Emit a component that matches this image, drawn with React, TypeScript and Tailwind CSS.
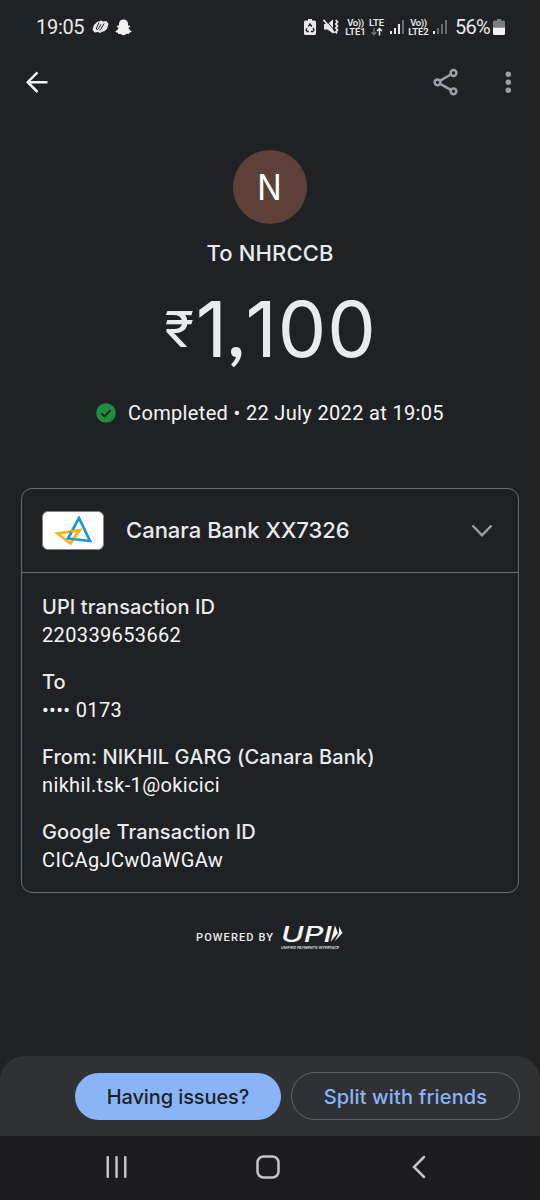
import type { ReactNode } from 'react';

// ---------- Types ----------

interface DetailItem {
  label: string;
  value: ReactNode;
}

// ---------- Data ----------

const DETAILS: DetailItem[] = [
  { label: 'UPI transaction ID', value: '220339653662' },
  { label: 'To', value: '•••• 0173' },
  { label: 'From: NIKHIL GARG (Canara Bank)', value: 'nikhil.tsk-1@okicici' },
  { label: 'Google Transaction ID', value: 'CICAgJCw0aWGAw' },
];

// ---------- Status bar ----------

function SignalBars({ strong }: { strong: number }) {
  const bars = [
    { x: 0, h: 3 },
    { x: 4, h: 6 },
    { x: 8, h: 10 },
    { x: 12, h: 14 },
  ];
  return (
    <svg width="15" height="14" viewBox="0 0 15 14" aria-hidden="true">
      {bars.map((bar, i) => (
        <rect
          key={bar.x}
          x={bar.x}
          y={14 - bar.h}
          width="2"
          height={bar.h}
          fill={i < strong ? '#e8e8ea' : '#6a6b6e'}
        />
      ))}
    </svg>
  );
}

function VolteLabel({ sim }: { sim: string }) {
  return (
    <div className="flex w-[21px] flex-col items-center text-[9.5px] leading-[9px] font-semibold whitespace-nowrap">
      <span className="tracking-[-0.4px]">Vo))</span>
      <span className="tracking-[-0.1px]">{sim}</span>
    </div>
  );
}

function StatusBar() {
  return (
    <header className="flex h-[54px] shrink-0 items-center pr-[35px] pl-9 font-[Roboto,sans-serif] text-[#e8e8ea]">
      <span className="text-[20px] leading-6 tracking-[-0.3px]">19:05</span>
      <svg className="ml-2" width="17" height="14" viewBox="0 0 17 14" aria-hidden="true">
        <path d="M5 2 9 .5l2 1L14.500 1l2 3-1.500 5-3 2.500-1.500 0L8 13l-2-1-3.500.5L.5 9.500 2 5z" fill="#e8e8ea" />
        <path
          d="M7 2.500 4.500 8q-.4 1.800 1 1.500 1-.3 1.500-1.600L9 4.200M12 3.500 9.500 8q-.6 1.800-2 2.300"
          fill="none"
          stroke="#202124"
          strokeWidth="1"
        />
      </svg>
      <svg className="ml-[6px]" width="17" height="17" viewBox="0 0 17 17" aria-hidden="true">
        <path
          d="M8.500.5C5.500.5 4 2.500 4 5v1.500l-1.800.2c-.8.5-.2 1.300 1.300 1.900C3.300 10.300 2 11.500.5 12.200c-.5.6.5 1.200 2.200 1.400l.4 1.300 2.300-.2c1 .4 1.500 1.500 3.100 1.500s2.100-1.100 3.100-1.500l2.300.2.4-1.300c1.700-.2 2.700-.8 2.200-1.400-1.500-.7-2.800-1.900-3-3.600 1.500-.6 2.100-1.400 1.300-1.900L13 6.500V5C13 2.500 11.500.5 8.500.5z"
          fill="#f1f1f2"
        />
      </svg>

      <div className="ml-auto flex items-center">
        {/* Battery saver */}
        <svg width="12" height="16" viewBox="0 0 12 16" aria-hidden="true">
          <path d="M4 0h4v1.500h2.500Q12 1.500 12 3v11.500Q12 16 10.500 16h-9Q0 16 0 14.500V3q0-1.500 1.500-1.500H4z" fill="#e8e8ea" />
          <path
            d="M4.300 7.500 6 5l1.800 2.500M9 8.800l1 2.200-1.200 1.500H6.800M4.800 12.500H3.200L2 11l1-1.800"
            fill="none"
            stroke="#202124"
            strokeWidth="1.300"
          />
        </svg>
        {/* Muted with vibration */}
        <svg className="ml-[7px]" width="16" height="16" viewBox="0 0 16 16" aria-hidden="true">
          <path d="M1 5h3.500L10 .5v14l-5.500-4H1z" fill="#e8e8ea" />
          <path d="m2 0 9.500 11.500" stroke="#202124" strokeWidth="1" />
          <path d="m.5.8 11 13.200" stroke="#e8e8ea" strokeWidth="1.700" />
          <path d="m12.800 1 1.700 2-1.700 2 1.700 2-1.700 2 1.700 2-1.700 2 1.200 1.500" fill="none" stroke="#e8e8ea" strokeWidth="1.800" />
        </svg>
        <div className="ml-[6px]">
          <VolteLabel sim="LTE1" />
        </div>
        <div className="ml-[2px] flex w-[17px] flex-col items-center text-[9.5px] leading-[9px] font-semibold">
          <span>LTE</span>
          <svg width="12" height="9" viewBox="0 0 12 9" aria-hidden="true">
            <path d="M3 1v6.500M.8 5.200 3 7.500l2.200-2.300" fill="none" stroke="#77787b" strokeWidth="1.300" />
            <path d="M8.500 8.500v-7M6 4l2.500-2.500L11 4" fill="none" stroke="#e8e8ea" strokeWidth="1.500" />
          </svg>
        </div>
        <div className="ml-[5px]">
          <SignalBars strong={3} />
        </div>
        <div className="ml-[3px]">
          <VolteLabel sim="LTE2" />
        </div>
        <div className="ml-[4px]">
          <SignalBars strong={1} />
        </div>
        <span className="ml-[7px] w-[38px] text-[20px] leading-6 tracking-[-0.7px]">56%</span>
        <svg width="12" height="16" viewBox="0 0 12 16" aria-hidden="true">
          <path d="M4 0h4v1.500h2.500Q12 1.500 12 3v5.500H0V3q0-1.500 1.500-1.500H4z" fill="#7b7c7f" />
          <path d="M0 8.500h12v6q0 1.500-1.500 1.500h-9Q0 16 0 14.500z" fill="#f1f1f2" />
        </svg>
      </div>
    </header>
  );
}

// ---------- App bar ----------

function AppBar() {
  return (
    <div className="flex h-14 shrink-0 items-center pr-7 pl-[26px]">
      <svg width="22" height="22" viewBox="0 0 22 22" fill="none" stroke="#f1f3f4" strokeWidth="2.500" aria-label="Back">
        <path d="M21.500 11.200H2.500M11.500 1.400 1.700 11.200l9.800 9.800" />
      </svg>
      <svg className="ml-auto" width="26" height="28" viewBox="0 0 26 28" fill="none" stroke="#9aa0a6" strokeWidth="2.500" aria-label="Share">
        <circle cx="4.500" cy="14.300" r="2.900" />
        <circle cx="20.500" cy="5" r="2.900" />
        <circle cx="20.500" cy="23.300" r="2.900" />
        <path d="m7.200 12.700 10.600-6.200M7.200 15.900l10.600 5.900" />
      </svg>
      <svg className="ml-[45px]" width="8" height="24" viewBox="0 0 8 24" fill="#9aa0a6" aria-label="More options">
        <circle cx="4.300" cy="4.200" r="2.700" />
        <circle cx="4.300" cy="12.200" r="2.700" />
        <circle cx="4.300" cy="20.200" r="2.700" />
      </svg>
    </div>
  );
}

// ---------- Logos ----------

function CanaraLogo() {
  return (
    <div className="flex h-[39px] w-[62px] items-center justify-center rounded-md border border-[#80868b] bg-white">
      <svg width="38" height="30" viewBox="0 0 38 30" fill="none" aria-hidden="true">
        <path d="m3.500 17.500 22-3.200L16.500 27.500z" stroke="#fbb11e" strokeWidth="2.700" />
        <path d="M25 2 36 25l-22-2.500z" stroke="#1a97d8" strokeWidth="2.700" />
        <path d="m17 15.500 8.500-1.200-5.500 7.800" stroke="#fbb11e" strokeWidth="2.700" />
      </svg>
    </div>
  );
}

function UpiLogo() {
  return (
    <svg className="overflow-visible" width="64" height="28" viewBox="0 0 64 28" fill="#f1f3f4" aria-label="UPI">
      <text
        x="1"
        y="19"
        fontFamily="Inter, sans-serif"
        fontSize="22"
        fontStyle="italic"
        fontWeight="500"
        textLength="51"
        lengthAdjust="spacingAndGlyphs"
      >
        UPI
      </text>
      <path d="m55 2.500 3 7.500-7.500 9z" />
      <path d="m59 3.500 3.500 6.500-8 8.500 4.500-8.500z" />
      <text
        x="1"
        y="25.500"
        fontFamily="Inter, sans-serif"
        fontSize="4"
        fontStyle="italic"
        fontWeight="500"
        textLength="58"
        lengthAdjust="spacingAndGlyphs"
      >
        UNIFIED PAYMENTS INTERFACE
      </text>
    </svg>
  );
}

// ---------- Sections ----------

function PaymentSummary() {
  return (
    <section className="flex flex-col items-center pt-10">
      <div className="flex size-[74px] items-center justify-center rounded-full bg-[#5d4037] text-[36px] leading-none text-white">
        <span className="scale-x-90">N</span>
      </div>
      <h1 className="mt-[15px] text-[22px] leading-7 font-medium tracking-[0.15px]">To NHRCCB</h1>
      <div className="mt-[21px] flex h-[82px] items-center pl-[3px]">
        <span className="mr-[3px] scale-x-[1.12] text-[49px] leading-none font-normal">₹</span>
        <span className="text-[77px] leading-none tracking-[1px]">
          1<span className="font-[Lato,sans-serif] text-[70px] leading-none font-bold">,</span>100
        </span>
      </div>
      <div className="mt-[29px] flex h-7 items-center font-[Roboto,sans-serif] text-[20px] tracking-[0.34px] text-[#f4f5f6]">
        <svg className="mr-3" width="20" height="20" viewBox="0 0 20 20" aria-hidden="true">
          <circle cx="10" cy="10" r="9.800" fill="#1e8e3e" />
          <path d="m5.500 10.300 3 3 6-6" fill="none" stroke="#202124" strokeWidth="1.900" />
        </svg>
        <span>Completed • 22 July 2022 at 19:05</span>
      </div>
    </section>
  );
}

function DetailsCard() {
  return (
    <section className="mx-[21px] mt-[61px] h-[405px] rounded-[11px] border border-[#6b6e72]">
      <div className="flex h-[84px] items-center border-b border-[#6b6e72] pr-[25px] pl-5">
        <CanaraLogo />
        <span className="ml-[22px] text-[22px] font-medium">Canara Bank XX7326</span>
        <svg className="ml-auto" width="22" height="14" viewBox="0 0 22 14" fill="none" stroke="#9aa0a6" strokeWidth="2.500" aria-hidden="true">
          <path d="m1.500 1.500 9.500 9.800 9.500-9.800" />
        </svg>
      </div>
      <dl className="flex flex-col gap-[18px] px-5 pt-5">
        {DETAILS.map((item) => (
          <div key={item.label} className="h-[57px]">
            <dt className="text-[20px] leading-[28px] font-medium tracking-[0.110px]">{item.label}</dt>
            <dd className="font-[Roboto,sans-serif] text-[20px] leading-[29px] tracking-[0.36px] text-[#f4f5f6]">
              {item.value}
            </dd>
          </div>
        ))}
      </dl>
    </section>
  );
}

function BottomActions() {
  return (
    <div className="mt-auto flex h-20 shrink-0 items-center justify-end gap-[10px] rounded-t-[24px] bg-[#303134] pr-5 text-[20px] font-medium">
      <button className="h-[47px] w-[206px] rounded-full bg-[#8ab4f8] pt-px tracking-[-0.1px] text-[#202124]">
        Having issues?
      </button>
      <button className="h-12 w-[229px] rounded-full border border-[#5f6368] pt-px tracking-[0.15px] text-[#8ab4f8]">
        Split with friends
      </button>
    </div>
  );
}

function NavigationBar() {
  return (
    <nav className="flex h-16 shrink-0 items-center bg-[#1d1d1f] pr-[114px] pb-0.5 pl-[106px]">
      <svg width="22" height="24" viewBox="0 0 22 24" fill="#c4c4c6" aria-label="Recents">
        <rect x="0.500" y="1" width="2.500" height="22" rx="1" />
        <rect x="9.300" y="1" width="2.500" height="22" rx="1" />
        <rect x="18" y="1" width="2.500" height="22" rx="1" />
      </svg>
      <svg className="ml-[128px]" width="24" height="24" viewBox="0 0 24 24" fill="none" stroke="#c4c4c6" strokeWidth="2.500" aria-label="Home">
        <rect x="1.500" y="1.500" width="21" height="21" rx="6" />
      </svg>
      <svg className="ml-auto" width="14" height="24" viewBox="0 0 14 24" fill="none" stroke="#c4c4c6" strokeWidth="2.500" strokeLinecap="round" aria-label="Back">
        <path d="m12 2-10 10 10 10" />
      </svg>
    </nav>
  );
}

// ---------- Page ----------

export default function App() {
  return (
    <div className="flex h-[1200px] w-[540px] flex-col overflow-hidden bg-[#202124] font-[Inter,sans-serif] text-[#e8eaed]">
      <StatusBar />
      <AppBar />
      <PaymentSummary />
      <DetailsCard />
      <div className="mt-[30px] flex items-center justify-center gap-[6px]">
        <span className="pt-0.5 font-[Roboto,sans-serif] text-[11px] font-medium tracking-[1.100px]">POWERED BY</span>
        <UpiLogo />
      </div>
      <BottomActions />
      <NavigationBar />
    </div>
  );
}
